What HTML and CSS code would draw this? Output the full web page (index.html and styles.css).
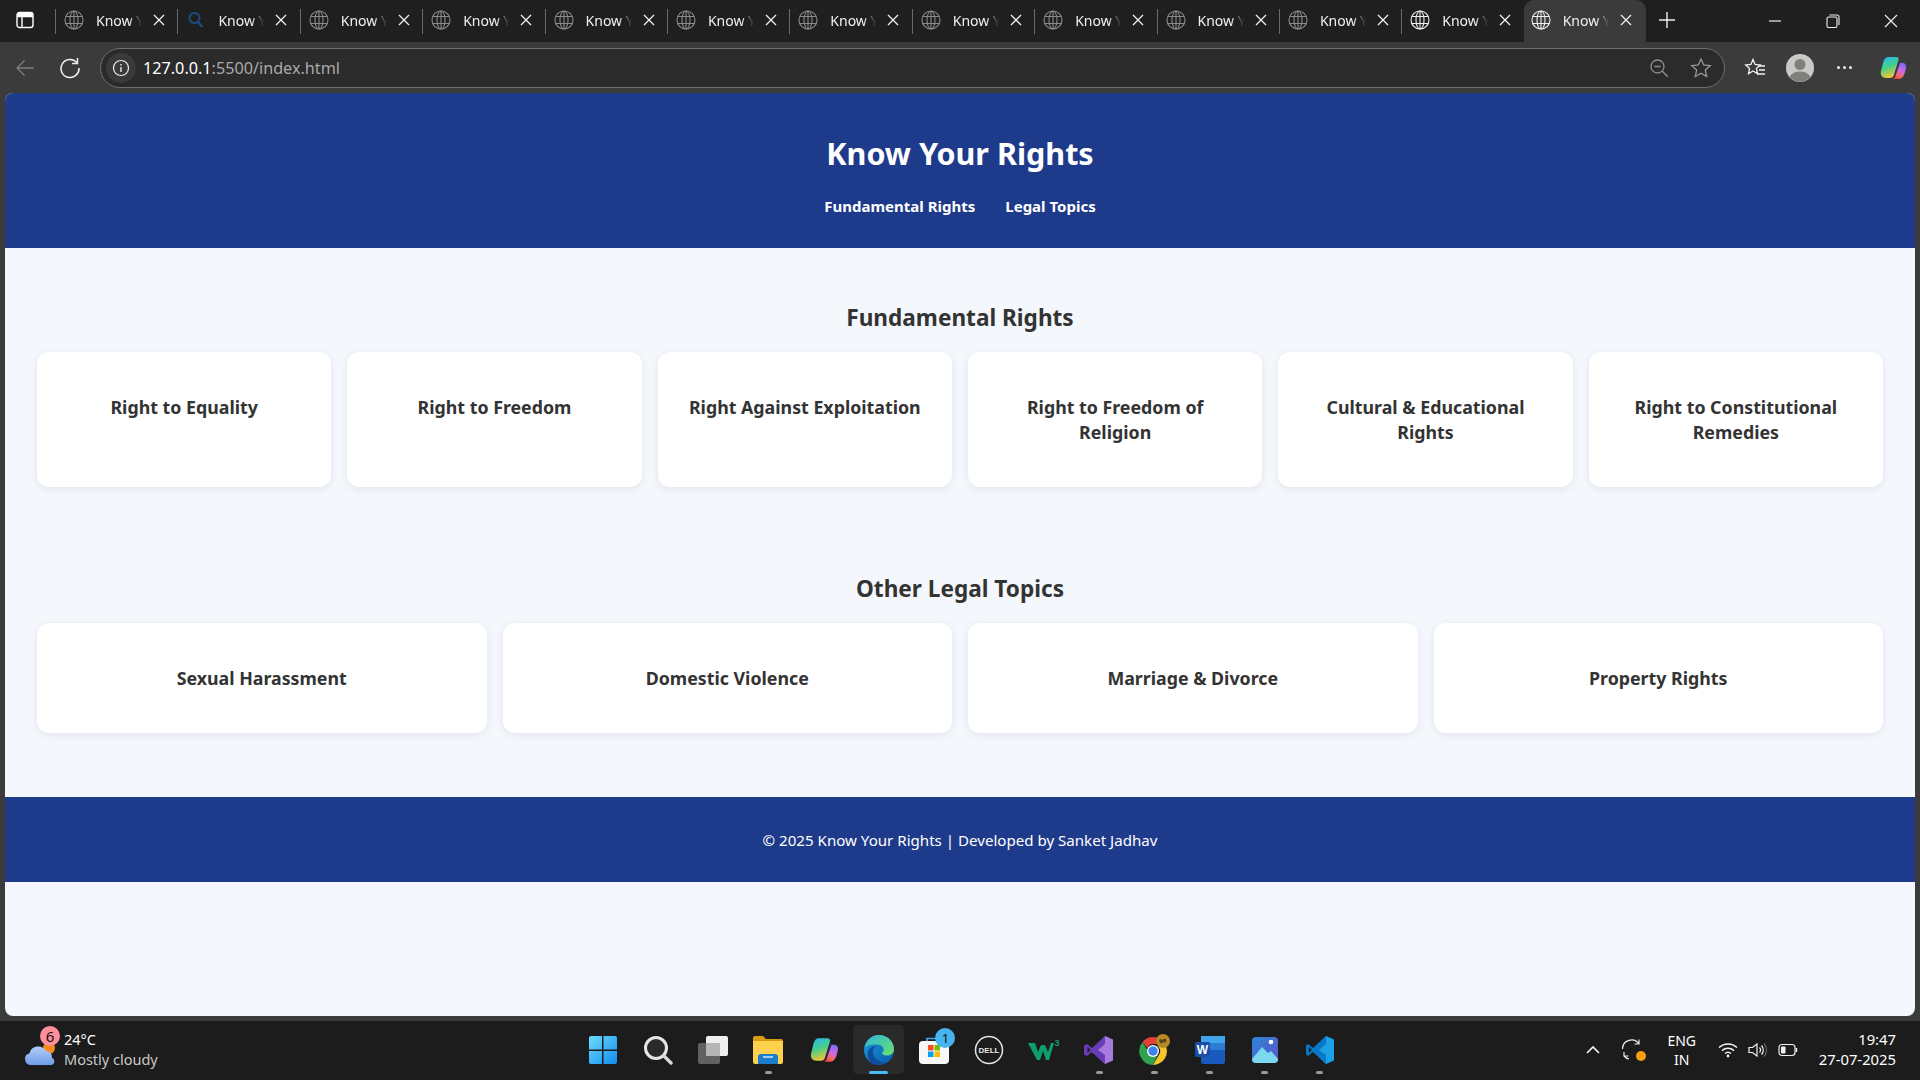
FILE: index.html
```html
<!DOCTYPE html>
<html lang="en">
  <head>
    <meta charset="UTF-8" />
    <meta name="viewport" content="width=device-width, initial-scale=1.0" />
    <title>Know Your Rights</title>
    <link rel="stylesheet" href="styles.css">
  </head>
  <body>
    <!-- shared icons -->
    <svg class="defs" width="0" height="0">
      <defs>
        <linearGradient id="cop1" x1="0.2" y1="0" x2="0.5" y2="1"><stop offset="0" stop-color="#2fb6f0" /><stop offset=".45" stop-color="#3ecf8e" /><stop offset="1" stop-color="#f5c530" /></linearGradient>
        <linearGradient id="cop2" x1="0.7" y1="0" x2="0.3" y2="1"><stop offset="0" stop-color="#7d6cf0" /><stop offset=".45" stop-color="#d268e0" /><stop offset=".8" stop-color="#f06a50" /><stop offset="1" stop-color="#f23c3c" /></linearGradient>
      </defs>
      <symbol id="globe" viewBox="0 0 20 20">
        <g fill="none" stroke="currentColor" stroke-width="1.1">
          <circle cx="10" cy="10" r="9" />
          <ellipse cx="10" cy="10" rx="4" ry="9" />
          <path d="M1.8 6.5h16.4M1.8 13.5h16.4M10 1v18" />
        </g>
      </symbol>
      <symbol id="close" viewBox="0 0 12 12">
        <path d="M1 1l10 10M11 1L1 11" fill="none" stroke="currentColor" stroke-width="1.3" />
      </symbol>
      <symbol id="copilot" viewBox="0 0 28 28">
        <path d="M9 3h8c2 0 3 1 2.600 3L15 21c-.6 2-2 3-4 3H7c-4 0-6-3-5-7l2-8c.8-3.500 2.500-6 5-6z" fill="url(#cop1)" />
        <path d="M13 25h7c3 0 5-3 6-7l1-4c.6-3-1-5-3.500-5H21L16 23c-.5 1-1.500 2-3 2z" fill="url(#cop2)" />
        <path d="M19.600 6L15 21c-.3 1-1 2-2 3 1.500.5 2.500-.5 3-1l5-14c-.3-1-.8-2.300-1.400-3z" fill="#3a2a80" fill-opacity=".55" />
      </symbol>
    </svg>

    <div class="tabstrip">
      <div class="tab-toggle">
        <svg width="18" height="18" viewBox="0 0 18 18">
          <rect x="1" y="1.5" width="16" height="15" rx="2.5" fill="none" stroke="#fff" stroke-width="1.4" />
          <path d="M1 5.5h16M6 5.5v10.5" stroke="#fff" stroke-width="1.4" fill="none" />
          <rect x="1.5" y="2" width="15" height="3.5" fill="#fff" />
        </svg>
      </div>
      <div class="tab"><svg class="favicon"><use href="#globe" /></svg><span class="tab-title">Know Y</span><svg class="tab-close"><use href="#close" /></svg></div>
      <div class="tab">
        <svg class="favicon" viewBox="0 0 20 20"><circle cx="8.5" cy="8" r="5" fill="none" stroke="#1c4f86" stroke-width="2" /><path d="M12 12l4.5 5" stroke="#1c4f86" stroke-width="2" /></svg>
        <span class="tab-title">Know Y</span><svg class="tab-close"><use href="#close" /></svg>
      </div>
      <div class="tab"><svg class="favicon"><use href="#globe" /></svg><span class="tab-title">Know Y</span><svg class="tab-close"><use href="#close" /></svg></div>
      <div class="tab"><svg class="favicon"><use href="#globe" /></svg><span class="tab-title">Know Y</span><svg class="tab-close"><use href="#close" /></svg></div>
      <div class="tab"><svg class="favicon"><use href="#globe" /></svg><span class="tab-title">Know Y</span><svg class="tab-close"><use href="#close" /></svg></div>
      <div class="tab"><svg class="favicon"><use href="#globe" /></svg><span class="tab-title">Know Y</span><svg class="tab-close"><use href="#close" /></svg></div>
      <div class="tab"><svg class="favicon"><use href="#globe" /></svg><span class="tab-title">Know Y</span><svg class="tab-close"><use href="#close" /></svg></div>
      <div class="tab"><svg class="favicon"><use href="#globe" /></svg><span class="tab-title">Know Y</span><svg class="tab-close"><use href="#close" /></svg></div>
      <div class="tab"><svg class="favicon"><use href="#globe" /></svg><span class="tab-title">Know Y</span><svg class="tab-close"><use href="#close" /></svg></div>
      <div class="tab"><svg class="favicon"><use href="#globe" /></svg><span class="tab-title">Know Y</span><svg class="tab-close"><use href="#close" /></svg></div>
      <div class="tab"><svg class="favicon"><use href="#globe" /></svg><span class="tab-title">Know Y</span><svg class="tab-close"><use href="#close" /></svg></div>
      <div class="tab tab-bright"><svg class="favicon"><use href="#globe" /></svg><span class="tab-title">Know Y</span><svg class="tab-close"><use href="#close" /></svg></div>
      <div class="tab tab-active"><svg class="favicon"><use href="#globe" /></svg><span class="tab-title">Know Y</span><svg class="tab-close"><use href="#close" /></svg></div>
      <div class="new-tab">
        <svg width="18" height="18" viewBox="0 0 18 18"><path d="M9 1v16M1 9h16" stroke="#eee" stroke-width="1.4" /></svg>
      </div>
      <div class="window-buttons">
        <svg width="14" height="14" viewBox="0 0 14 14"><path d="M1 7h12" stroke="#eee" stroke-width="1.2" /></svg>
        <svg width="14" height="14" viewBox="0 0 14 14"><rect x="1" y="3" width="10" height="10.5" rx="1.5" fill="none" stroke="#eee" stroke-width="1.1" /><path d="M3.5 1h7.5a2 2 0 0 1 2 2v8" fill="none" stroke="#eee" stroke-width="1.1" /></svg>
        <svg width="14" height="14" viewBox="0 0 14 14"><path d="M1 1l12 12M13 1L1 13" stroke="#eee" stroke-width="1.2" /></svg>
      </div>
    </div>

    <div class="toolbar">
      <button class="tool-btn">
        <svg width="20" height="18" viewBox="0 0 20 18"><path d="M19 9H2M9.5 1.5L2 9l7.500 7.500" fill="none" stroke="#7e7e7e" stroke-width="1.4" /></svg>
      </button>
      <button class="tool-btn tool-reload">
        <svg width="22" height="22" viewBox="0 0 22 22"><path d="M17.8 5.6A9 9 0 1 0 20 11" fill="none" stroke="#f2f2f2" stroke-width="1.5" /><path d="M18.5 1v5.4h-5.4" fill="none" stroke="#f2f2f2" stroke-width="1.5" /></svg>
      </button>
      <div class="address-bar">
        <div class="site-info">
          <svg width="18" height="18" viewBox="0 0 18 18"><circle cx="9" cy="9" r="7.5" fill="none" stroke="#eee" stroke-width="1.2" /><path d="M9 8v5M9 5v1.4" stroke="#eee" stroke-width="1.4" /></svg>
        </div>
        <div class="url"><span class="url-host">127.0.0.1</span>:5500/index.html</div>
        <div class="address-actions">
          <svg width="20" height="20" viewBox="0 0 20 20"><circle cx="8.5" cy="8.5" r="6.5" fill="none" stroke="#8f8f8f" stroke-width="1.3" /><path d="M5.5 8.5h6M13.3 13.3l5.5 5.5" stroke="#8f8f8f" stroke-width="1.3" /></svg>
          <svg width="22" height="22" viewBox="0 0 22 22"><path d="M11 2l2.700 6 6.500.7-4.900 4.400 1.400 6.400L11 16.200l-5.700 3.300 1.400-6.400-4.900-4.400L8.300 8z" fill="none" stroke="#9a9a9a" stroke-width="1.3" /></svg>
        </div>
      </div>
      <div class="toolbar-right">
        <svg width="22" height="22" viewBox="0 0 22 22"><path d="M9 2.500l2.100 5 5.200.5-3.900 3.500 1.100 5.200L9 14l-4.500 2.700 1.100-5.200L1.700 8l5.200-.5z" fill="none" stroke="#f2f2f2" stroke-width="1.3" /><path d="M15 9h6M15 13h6M13 17h8" stroke="#f2f2f2" stroke-width="1.3" /></svg>
        <div class="profile">
          <svg width="28" height="28" viewBox="0 0 28 28"><circle cx="14" cy="14" r="14" fill="#c9c9c5" /><circle cx="14" cy="10.500" r="5.500" fill="#807f7c" /><path d="M3.500 23a11 8 0 0 1 21 0a14 14 0 0 1-21 0z" fill="#807f7c" /></svg>
        </div>
        <div class="dots"><i></i><i></i><i></i></div>
        <svg class="copilot-small" width="28" height="28"><use href="#copilot" /></svg>
      </div>
    </div>

    <div class="page">
      <header class="site-header">
        <h1>Know Your Rights</h1>
        <nav class="site-nav">
          <a href="#fundamental">Fundamental Rights</a>
          <a href="#topics">Legal Topics</a>
        </nav>
      </header>

      <main>
        <section id="fundamental" class="topic-section">
          <h2>Fundamental Rights</h2>
          <div class="card-grid card-grid-six">
            <div class="card">Right to Equality</div>
            <div class="card">Right to Freedom</div>
            <div class="card">Right Against Exploitation</div>
            <div class="card">Right to Freedom of Religion</div>
            <div class="card">Cultural &amp; Educational Rights</div>
            <div class="card">Right to Constitutional Remedies</div>
          </div>
        </section>

        <section id="topics" class="topic-section">
          <h2>Other Legal Topics</h2>
          <div class="card-grid card-grid-four">
            <div class="card">Sexual Harassment</div>
            <div class="card">Domestic Violence</div>
            <div class="card">Marriage &amp; Divorce</div>
            <div class="card">Property Rights</div>
          </div>
        </section>
      </main>

      <footer class="site-footer">© 2025 Know Your Rights | Developed by Sanket Jadhav</footer>
    </div>

    <div class="taskbar">
      <div class="weather">
        <div class="weather-icon">
          <svg width="34" height="26" viewBox="0 0 34 26">
            <defs><linearGradient id="cloud" x1="0" y1="0" x2="0" y2="1"><stop offset="0" stop-color="#b4cdf8" /><stop offset="1" stop-color="#6f9de8" /></linearGradient></defs>
            <circle cx="25" cy="8" r="6" fill="#f58a1f" />
            <path d="M7 25a6 6 0 0 1-1.500-11.800A9 9 0 0 1 22 11a6 6 0 0 1 6 7c3 .5 3.500 7-1 7z" fill="url(#cloud)" />
          </svg>
          <span class="weather-badge">6</span>
        </div>
        <div class="weather-text">
          <div>24°C</div>
          <div class="weather-desc">Mostly cloudy</div>
        </div>
      </div>

      <div class="task-icons">
        <div class="task-icon">
          <svg width="30" height="30" viewBox="0 0 30 30">
            <defs><linearGradient id="win" x1="0" y1="0" x2="1" y2="1"><stop offset="0" stop-color="#6fdcfb" /><stop offset="1" stop-color="#0f8cf0" /></linearGradient></defs>
            <path d="M1 3a2 2 0 0 1 2-2h11v13.500H1zM15.500 1H27a2 2 0 0 1 2 2v11.500H15.500zM1 16h13v13H3a2 2 0 0 1-2-2zM15.500 16H29v11a2 2 0 0 1-2 2H15.500z" fill="url(#win)" />
          </svg>
        </div>
        <div class="task-icon">
          <svg width="30" height="30" viewBox="0 0 30 30"><circle cx="13" cy="13" r="10.500" fill="#2a2a2a" stroke="#e6e6e6" stroke-width="3" /><path d="M21 21l7 7" stroke="#d8d8d8" stroke-width="3.400" stroke-linecap="round" /></svg>
        </div>
        <div class="task-icon">
          <svg width="32" height="30" viewBox="0 0 32 30"><rect x="9" y="1" width="22" height="20" rx="2" fill="#eeeeee" /><rect x="1" y="8" width="22" height="21" rx="2" fill="#6b6b6b" fill-opacity=".88" /><rect x="9" y="8" width="14" height="13" fill="#b5b5b5" /></svg>
        </div>
        <div class="task-icon has-dot">
          <svg width="32" height="30" viewBox="0 0 32 30"><path d="M1 3a2 2 0 0 1 2-2h8l3 3h15a2 2 0 0 1 2 2v4H1z" fill="#d99a10" /><path d="M1 6h30v21a2 2 0 0 1-2 2H3a2 2 0 0 1-2-2z" fill="#fdd14e" /><path d="M6 29v-7a3 3 0 0 1 3-3h14a3 3 0 0 1 3 3v7z" fill="#1c7ecb" /><path d="M11 22h10" stroke="#cfe8fb" stroke-width="1.500" /></svg>
        </div>
        <div class="task-icon">
          <svg width="30" height="30"><use href="#copilot" /></svg>
        </div>
        <div class="task-icon task-active">
          <svg width="32" height="32" viewBox="0 0 32 32">
            <defs>
              <linearGradient id="edge1" x1="0" y1="0" x2="1" y2="1"><stop offset="0" stop-color="#2fb8d8" /><stop offset="1" stop-color="#6be06a" /></linearGradient>
              <linearGradient id="edge2" x1="0" y1="0" x2="1" y2="1"><stop offset="0" stop-color="#1a9fe0" /><stop offset="1" stop-color="#0b55a8" /></linearGradient>
            </defs>
            <circle cx="16" cy="16" r="15" fill="url(#edge2)" />
            <path d="M1.500 14C3 6 9 1 16 1c8.500 0 15 6.500 15 14 0 4-3 6.500-7 6.500-3 0-5-1-5-2.500 3-2 2-8-4-8.500C9 10 3.500 11 1.500 14z" fill="url(#edge1)" />
            <path d="M14 12c-4 1-5 6-3 10s7 6.500 11 6.500c-4 3-9 3-13 1-4-3-5-8-4-12 1-3 5-6 9-5.500z" fill="#0d4f9e" />
          </svg>
        </div>
        <div class="task-icon">
          <svg width="32" height="32" viewBox="0 0 32 32">
            <path d="M9 8V4.500h14V8" fill="none" stroke="#3fa9f5" stroke-width="1.600" />
            <rect x="1" y="7" width="30" height="23" rx="4" fill="#f7f7f7" />
            <rect x="10" y="11" width="5.500" height="5.500" fill="#f25022" /><rect x="16.500" y="11" width="5.500" height="5.500" fill="#7fba00" />
            <rect x="10" y="17.500" width="5.500" height="5.500" fill="#00a4ef" /><rect x="16.500" y="17.500" width="5.500" height="5.500" fill="#ffb900" />
          </svg>
          <span class="store-badge">1</span>
        </div>
        <div class="task-icon">
          <svg width="30" height="30" viewBox="0 0 30 30"><circle cx="15" cy="15" r="13.500" fill="none" stroke="#e4e4e4" stroke-width="1.500" /><text x="15" y="18" class="dell-mark" text-anchor="middle">DELL</text></svg>
        </div>
        <div class="task-icon">
          <svg width="32" height="24" viewBox="0 0 32 24"><path d="M0 5h7l3 9 3-7h4l3 7 3-9h3l-5 17h-3l-3-9-3 9H9z" fill="#0f9d6e" /><text x="29" y="8" class="w3-mark" text-anchor="middle">3</text></svg>
        </div>
        <div class="task-icon has-dot">
          <svg width="30" height="30" viewBox="0 0 30 30"><path d="M21 1l8 3.500v21L21 29 7 16z" fill="#a77be0" /><path d="M21 1L8 13 3 9 0 10.500v9L3 21l5-4 13 12V20l-7-5 7-6z" fill="#6a3bb8" /><path d="M3.500 12v6l3-3z" fill="#1e1e1e" /></svg>
        </div>
        <div class="task-icon has-dot">
          <svg width="32" height="32" viewBox="0 0 32 32">
            <path d="M15 3a14 14 0 0 1 12.100 7H15a6 6 0 0 0-5.600 3.900L4.600 8A14 14 0 0 1 15 3z" fill="#e5403a" />
            <path d="M27.100 10A14 14 0 0 1 15 31l6-10.200A6 6 0 0 0 20 12.500z" fill="#f7c52a" />
            <path d="M4.600 8l6 10.200A6 6 0 0 0 20 20.500L15 31A14 14 0 0 1 4.600 8z" fill="#2fa24e" />
            <circle cx="15" cy="17" r="6" fill="#fff" /><circle cx="15" cy="17" r="4.700" fill="#3d83ef" />
            <circle cx="25" cy="7" r="7" fill="#b78a28" /><path d="M21 6c2-2 3 1 5-1s3 2 2 3-3 0-4 1-2 0-3-3z" fill="#5a4518" />
          </svg>
        </div>
        <div class="task-icon has-dot">
          <svg width="32" height="30" viewBox="0 0 32 30">
            <rect x="7" y="1" width="24" height="28" rx="2" fill="#185abd" /><rect x="7" y="1" width="24" height="7" fill="#41a5ee" /><rect x="7" y="8" width="24" height="7" fill="#2b7cd3" />
            <rect x="1" y="7" width="15" height="15" rx="1.500" fill="#1a4fa8" /><text x="8.500" y="19" class="word-mark" text-anchor="middle">W</text>
          </svg>
        </div>
        <div class="task-icon has-dot">
          <svg width="28" height="28" viewBox="0 0 28 28">
            <defs><linearGradient id="pho" x1="0" y1="0" x2="1" y2="1"><stop offset="0" stop-color="#2f84d8" /><stop offset="1" stop-color="#5a54c9" /></linearGradient></defs>
            <rect x="1" y="1" width="26" height="26" rx="4" fill="url(#pho)" /><circle cx="20" cy="6" r="2.300" fill="#fff" />
            <path d="M1 23l10-12 6 6 3-2 7 8v0a4 4 0 0 1-4 4H5a4 4 0 0 1-4-4z" fill="#7bd8ee" />
          </svg>
        </div>
        <div class="task-icon has-dot">
          <svg width="30" height="30" viewBox="0 0 30 30"><path d="M21 1l8 3.500v21L21 29 8 16z" fill="#1ba1e8" /><path d="M21 1L8 13 3 9l-2 1.500v9L3 21l5-4 13 12V20l-7-5 7-6z" fill="#0a78c8" /><path d="M3.800 12v6l3-3z" fill="#1c1c1c" /></svg>
        </div>
      </div>

      <div class="tray">
        <svg class="tray-chevron" width="14" height="8" viewBox="0 0 14 8"><path d="M1 7l6-6 6 6" fill="none" stroke="#f2f2f2" stroke-width="1.700" /></svg>
        <div class="tray-sync">
          <svg width="22" height="22" viewBox="0 0 22 22"><path d="M1.500 10A9 9 0 0 1 18 5M18 .5V5h-4.500M3 17h4.500M3 13v4a9 9 0 0 0 5 3" fill="none" stroke="#ececec" stroke-width="1.200" /></svg>
          <i class="sync-dot"></i>
        </div>
        <div class="tray-lang">ENG<br />IN</div>
        <div class="tray-status">
          <svg width="20" height="16" viewBox="0 0 20 16"><g fill="none" stroke="#f2f2f2" stroke-width="1.500"><path d="M1 5.500a13 13 0 0 1 18 0M4 8.600a9 9 0 0 1 12 0M7 11.500a4.500 4.500 0 0 1 6 0" /></g><circle cx="10" cy="14" r="1.400" fill="#f2f2f2" /></svg>
          <svg width="20" height="16" viewBox="0 0 20 16"><path d="M1 5.500h3.500L9 2v12l-4.500-3.500H1z" fill="none" stroke="#f2f2f2" stroke-width="1.200" /><path d="M11.500 5.500a3.500 3.500 0 0 1 0 5M13.500 3.500a6.500 6.500 0 0 1 0 9" fill="none" stroke="#f2f2f2" stroke-width="1.200" /><path d="M16 1.500a9.500 9.500 0 0 1 0 13" fill="none" stroke="#666" stroke-width="1.200" /></svg>
          <svg width="20" height="14" viewBox="0 0 20 14"><rect x="1" y="1.500" width="16" height="11" rx="3" fill="none" stroke="#f2f2f2" stroke-width="1.200" /><rect x="3" y="3.500" width="4.500" height="7" rx="1" fill="#f2f2f2" /><path d="M18.500 5v4" stroke="#f2f2f2" stroke-width="1.400" /></svg>
        </div>
        <div class="tray-clock">19:47<br />27-07-2025</div>
      </div>
    </div>
  </body>
</html>
```

FILE: styles.css
```css
* {
  box-sizing: border-box;
}

html,
body {
  height: 100%;
}

body {
  margin: 0;
  display: flex;
  flex-direction: column;
  overflow: hidden;
  background-color: #3b3b3b;
  font-family: "Noto Sans", "Open Sans", sans-serif;
}

.defs {
  position: absolute;
}

/* browser tabs */
.tabstrip {
  display: flex;
  align-items: center;
  height: 42px;
  flex-shrink: 0;
  background-color: #1f1f1f;
}

.tab-toggle {
  display: flex;
  justify-content: center;
  width: 55px;
  padding: 0 6px 2px 0;
}

.tab {
  position: relative;
  display: flex;
  align-items: center;
  width: 122.4px;
  height: 42px;
  padding: 0 0 2px 9px;
  color: #8a8a8a;
}

.tab::before {
  content: "";
  position: absolute;
  left: 0;
  top: 9px;
  height: 25px;
  border-left: 1px solid #6a6a6a;
}

.favicon {
  width: 20px;
  height: 20px;
  flex-shrink: 0;
}

.tab-title {
  width: 46px;
  margin-left: 12px;
  white-space: nowrap;
  font-size: 14px;
  color: #f0f0f0;
  -webkit-mask-image: linear-gradient(to right, #000 72%, transparent 100%);
  mask-image: linear-gradient(to right, #000 72%, transparent 100%);
}

.tab-close {
  width: 12px;
  height: 12px;
  margin-left: 11px;
  color: #f0f0f0;
}

.tab-bright .favicon {
  color: #f0f0f0;
}

.tab-active {
  padding-left: 7px;
  background-color: #3b3b3b;
  border-radius: 10px 10px 0 0;
  color: #f0f0f0;
}

.tab-active::before {
  display: none;
}

.new-tab {
  display: flex;
  margin: 0 0 2px 12px;
}

.window-buttons {
  display: flex;
  gap: 44px;
  margin-left: auto;
  padding-right: 22px;
}

/* address bar row */
.toolbar {
  display: flex;
  align-items: center;
  height: 51px;
  flex-shrink: 0;
  padding: 0 12px 0 0;
  background-color: #3b3b3b;
}

.tool-btn {
  display: flex;
  align-items: center;
  justify-content: center;
  width: 44px;
  height: 40px;
  margin-left: 3px;
  padding: 0;
  background: none;
  border: none;
}

.tool-reload {
  margin-left: 1px;
}

.address-bar {
  display: flex;
  align-items: center;
  width: 1625px;
  height: 40px;
  margin-left: 8px;
  padding-left: 5px;
  background-color: #2b2b2b;
  border: 1px solid #6e6e6e;
  border-radius: 20px;
}

.site-info {
  display: flex;
  align-items: center;
  justify-content: center;
  width: 30px;
  height: 30px;
  background-color: #3a3a3a;
  border-radius: 50%;
}

.url {
  margin-left: 7px;
  font-size: 16.2px;
  color: #a9a9a9;
}

.url-host {
  color: #fff;
}

.address-actions {
  display: flex;
  align-items: center;
  gap: 21px;
  margin-left: auto;
  padding-right: 12px;
}

.toolbar-right {
  display: flex;
  align-items: center;
  margin-left: 19px;
}

.profile {
  display: flex;
  margin-left: 20px;
}

.dots {
  display: flex;
  gap: 3px;
  margin-left: 23px;
}

.dots i {
  width: 3px;
  height: 3px;
  background-color: #eee;
  border-radius: 50%;
}

.copilot-small {
  margin-left: 27px;
}

/* the page itself */
.page {
  display: flex;
  flex-direction: column;
  flex: 1;
  margin: 0 5px 5px;
  overflow: hidden;
  background-color: #f4f7fb;
  border-radius: 8px;
  color: #333;
}

.site-header {
  height: 155px;
  padding-top: 39px;
  background-color: #1e3a8a;
  color: #fff;
  text-align: center;
}

.site-header h1 {
  margin: 0 0 21px;
  font-size: 30.5px;
  line-height: 42px;
  font-weight: 700;
}

.site-nav {
  display: flex;
  justify-content: center;
  gap: 30px;
}

.site-nav a {
  font-size: 15px;
  line-height: 22px;
  font-weight: 700;
  color: #fff;
  text-decoration: none;
}

.topic-section {
  padding: 54px 32px 0;
}

.topic-section + .topic-section {
  padding-top: 86px;
}

.topic-section h2 {
  margin: 0 0 18px;
  font-size: 22.6px;
  line-height: 32px;
  font-weight: 700;
  text-align: center;
}

.card-grid {
  display: grid;
  gap: 16px;
}

.card-grid-six {
  grid-template-columns: repeat(6, 1fr);
}

.card-grid-four {
  grid-template-columns: repeat(4, 1fr);
}

.card {
  padding: 43px 24px 42px;
  background-color: #fff;
  border-radius: 12px;
  box-shadow: 0 2px 8px rgba(0, 0, 0, 0.08);
  font-size: 17.8px;
  line-height: 25px;
  font-weight: 700;
  text-align: center;
}

.site-footer {
  margin-top: 64px;
  padding: 32px 0 31px;
  background-color: #1e3a8a;
  color: #fff;
  font-size: 15.1px;
  line-height: 22px;
  text-align: center;
}

/* windows taskbar */
.taskbar {
  display: flex;
  align-items: center;
  height: 59px;
  flex-shrink: 0;
  padding-bottom: 2px;
  background-color: #1c1c1c;
  color: #fff;
}

.weather {
  display: flex;
  align-items: center;
  width: 575.5px;
  padding-left: 24px;
}

.weather-icon {
  position: relative;
  display: flex;
  padding-top: 6px;
}

.weather-badge {
  position: absolute;
  left: 16px;
  top: -8px;
  width: 20px;
  height: 20px;
  background-color: #ff8f9b;
  border-radius: 50%;
  color: #111;
  font-size: 15px;
  line-height: 20px;
  text-align: center;
}

.weather-text {
  margin: 0 0 2px 6px;
  font-size: 14.5px;
  line-height: 20px;
}

.weather-desc {
  color: #c8c8c8;
}

.task-icons {
  display: flex;
}

.task-icon {
  position: relative;
  display: flex;
  align-items: center;
  justify-content: center;
  width: 55.15px;
  height: 49px;
}

.task-active {
  background-color: #2a2a2a;
  border-radius: 6px;
  background-clip: content-box;
  padding: 0 2px;
}

.task-active::after {
  content: "";
  position: absolute;
  left: 18px;
  bottom: 0;
  width: 19px;
  height: 3px;
  background-color: #47bdf5;
  border-radius: 2px;
}

.has-dot::after {
  content: "";
  position: absolute;
  left: 24px;
  bottom: 0;
  width: 7px;
  height: 3px;
  background-color: #9a9a9a;
  border-radius: 2px;
}

.store-badge {
  position: absolute;
  left: 29px;
  top: 3px;
  width: 20px;
  height: 20px;
  background-color: #47b4f0;
  border-radius: 50%;
  color: #111;
  font-size: 13px;
  line-height: 20px;
  text-align: center;
}

.dell-mark {
  font-family: "Liberation Sans", sans-serif;
  font-size: 8px;
  font-weight: 700;
  fill: #e4e4e4;
}

.w3-mark {
  font-family: "Liberation Sans", sans-serif;
  font-size: 9px;
  font-weight: 700;
  fill: #0f9d6e;
}

.word-mark {
  font-family: "Liberation Sans", sans-serif;
  font-size: 12px;
  font-weight: 700;
  fill: #fff;
}

.tray {
  display: flex;
  align-items: center;
  margin-left: auto;
  padding-right: 24px;
}

.tray-chevron {
  margin-right: 21px;
}

.tray-sync {
  position: relative;
  display: flex;
}

.sync-dot {
  position: absolute;
  right: -3px;
  bottom: 0;
  width: 10px;
  height: 10px;
  background-color: #f9a010;
  border-radius: 50%;
}

.tray-lang {
  width: 60px;
  margin-left: 9px;
  font-size: 14px;
  line-height: 19px;
  text-align: center;
}

.tray-status {
  display: flex;
  align-items: center;
  gap: 10px;
  margin-left: 6px;
}

.tray-clock {
  margin: 0 0 2px 21px;
  font-size: 14.8px;
  line-height: 20px;
  text-align: right;
}
```
